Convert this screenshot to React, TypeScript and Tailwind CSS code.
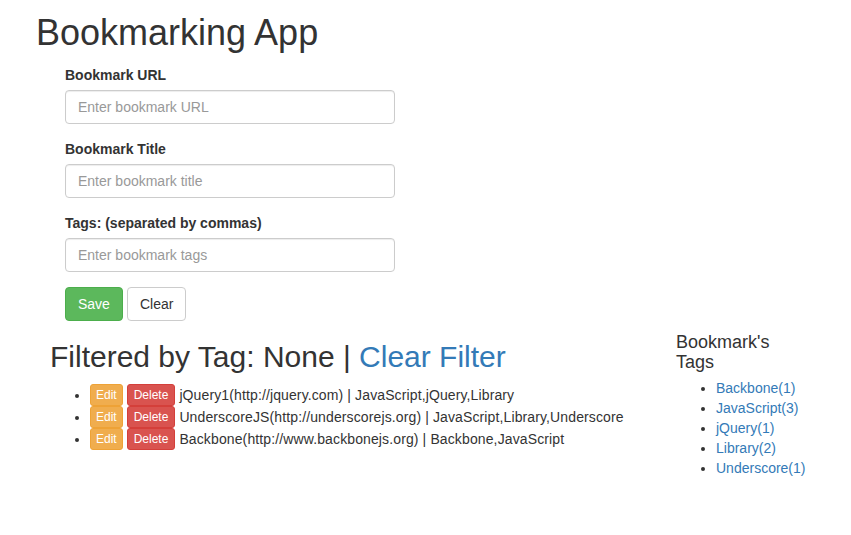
const bookmarks = [
  { title: 'jQuery1', url: 'http://jquery.com', tags: 'JavaScript,jQuery,Library' },
  { title: 'UnderscoreJS', url: 'http://underscorejs.org', tags: 'JavaScript,Library,Underscore' },
  { title: 'Backbone', url: 'http://www.backbonejs.org', tags: 'Backbone,JavaScript' },
];

const tagCounts = [
  'Backbone(1)',
  'JavaScript(3)',
  'jQuery(1)',
  'Library(2)',
  'Underscore(1)',
];

const fields = [
  { label: 'Bookmark URL', placeholder: 'Enter bookmark URL' },
  { label: 'Bookmark Title', placeholder: 'Enter bookmark title' },
  { label: 'Tags: (separated by commas)', placeholder: 'Enter bookmark tags' },
];

export default function App() {
  return (
    <div className="min-h-screen bg-white font-['Liberation_Sans',Arial,sans-serif] text-[14px] leading-[20px] text-[#333]">
      <h1 className="pl-[36px] pt-[13px] pb-[12px] text-[36px] leading-[40px]">Bookmarking App</h1>

      {/* form */}
      <form className="pl-[65px]" onSubmit={(e) => e.preventDefault()}>
        {fields.map((f) => (
          <div key={f.label} className="mb-[15px]">
            <label className="mb-[5px] block font-bold">{f.label}</label>
            <input
              type="text"
              placeholder={f.placeholder}
              className="block h-[34px] w-[330px] rounded-[4px] border border-[#ccc] px-3 text-[14px] text-[#555] shadow-[inset_0_1px_1px_rgba(0,0,0,0.075)] outline-none placeholder:text-[#999]"
            />
          </div>
        ))}
        <div className="flex gap-[4px]">
          <button className="h-[34px] rounded-[4px] border border-[#4cae4c] bg-[#5cb85c] px-3 text-white">
            Save
          </button>
          <button type="button" className="h-[34px] rounded-[4px] border border-[#ccc] bg-white px-3 text-[#333]">
            Clear
          </button>
        </div>
      </form>

      <div className="flex">
        {/* bookmark list */}
        <div className="w-[626px] pl-[50px] box-content">
          <h2 className="mt-[19px] mb-[11px] text-[30px] leading-[33px]">
            Filtered by Tag: None | <a href="#" className="text-[#337ab7]">Clear Filter</a>
          </h2>
          <ul className="list-disc pl-[40px] tracking-[0.12px]">
            {bookmarks.map((b) => (
              <li key={b.title} className="h-[22px] leading-[22px]">
                <button className="inline-block h-[22px] rounded-[3px] border border-[#eea236] bg-[#f0ad4e] px-[5px] align-top text-[12px] leading-[18px] tracking-normal text-white">
                  Edit
                </button>
                <button className="ml-[4px] inline-block h-[22px] rounded-[3px] border border-[#d43f3a] bg-[#d9534f] px-[6px] align-top text-[12px] leading-[18px] tracking-normal text-white">
                  Delete
                </button>
                <span className="ml-[4px]">
                  {b.title}({b.url}) | {b.tags}
                </span>
              </li>
            ))}
          </ul>
        </div>

        {/* tag sidebar */}
        <div className="w-[120px]">
          <h4 className="mt-[12px] mb-[5px] text-[18px] leading-[19.8px]">Bookmark's Tags</h4>
          <ul className="list-disc pl-[40px]">
            {tagCounts.map((t) => (
              <li key={t} className="whitespace-nowrap">
                <a href="#" className="text-[#337ab7]">{t}</a>
              </li>
            ))}
          </ul>
        </div>
      </div>
    </div>
  );
}
